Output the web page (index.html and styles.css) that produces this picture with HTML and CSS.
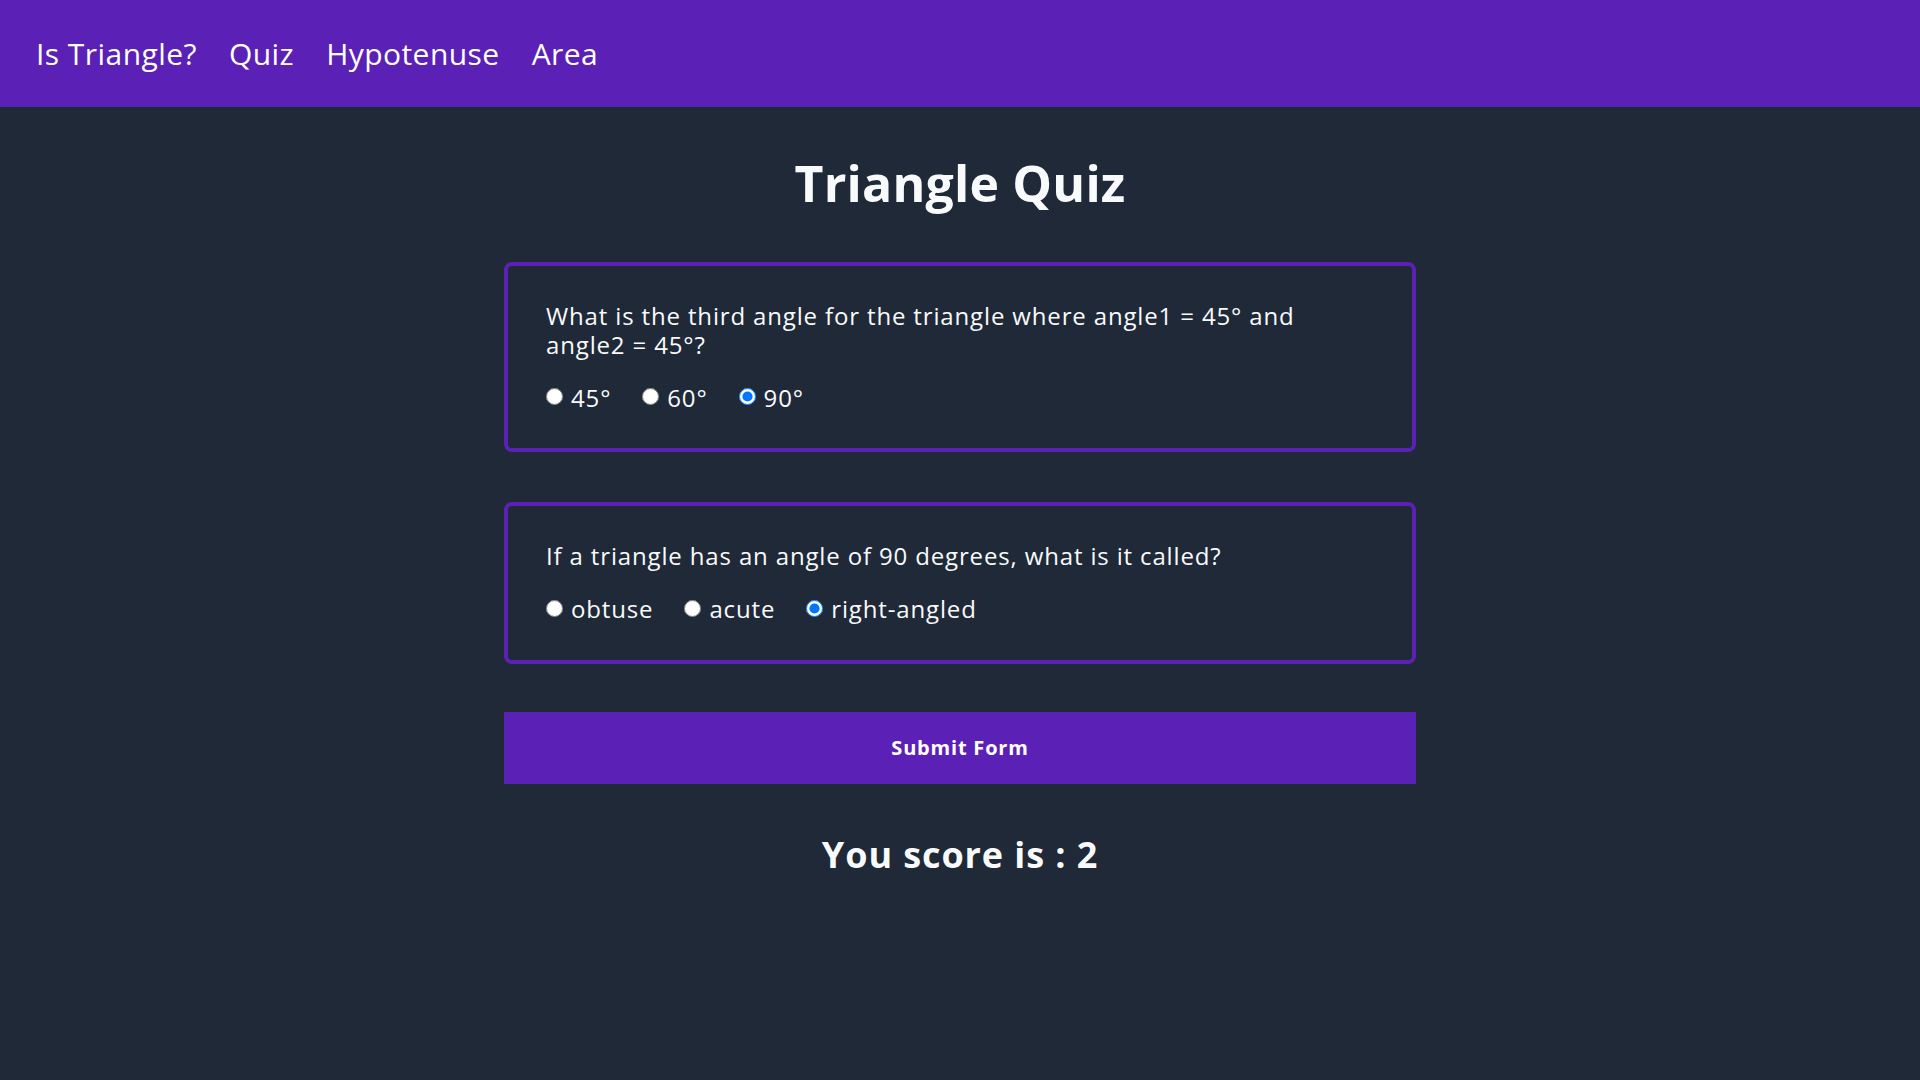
FILE: index.html
```html
<!DOCTYPE html>
<html lang="en">
<head>
<meta charset="utf-8">
<title>Triangle Quiz</title>
<link rel="stylesheet" href="styles.css">
</head>
<body>
<nav class="navbar">
  <a class="nav-link" href="#">Is Triangle?</a>
  <a class="nav-link" href="#">Quiz</a>
  <a class="nav-link" href="#">Hypotenuse</a>
  <a class="nav-link" href="#">Area</a>
</nav>
<main class="page">
  <h1 class="title">Triangle Quiz</h1>
  <form class="quiz-form">
    <div class="question-card">
      <p class="question">What is the third angle for the triangle where angle1 = 45° and angle2 = 45°?</p>
      <div class="options">
        <label class="option"><input type="radio" name="q1" value="45"><span>45°</span></label>
        <label class="option"><input type="radio" name="q1" value="60"><span>60°</span></label>
        <label class="option"><input type="radio" name="q1" value="90" checked><span>90°</span></label>
      </div>
    </div>
    <div class="question-card">
      <p class="question">If a triangle has an angle of 90 degrees, what is it called?</p>
      <div class="options">
        <label class="option"><input type="radio" name="q2" value="obtuse"><span>obtuse</span></label>
        <label class="option"><input type="radio" name="q2" value="acute"><span>acute</span></label>
        <label class="option"><input type="radio" name="q2" value="right" checked><span>right-angled</span></label>
      </div>
    </div>
    <button type="button" class="submit-btn">Submit Form</button>
  </form>
  <h2 class="score">You score is : 2</h2>
</main>
</body>
</html>
```

FILE: styles.css
```css
* {
  box-sizing: border-box;
}

html, body {
  margin: 0;
  padding: 0;
}

body {
  background: #1f2937;
  color: #f9fafb;
  font-family: "Open Sans", "Liberation Sans", sans-serif;
  min-height: 1080px;
}

.navbar {
  height: 107px;
  background: #5b21b6;
  display: flex;
  align-items: center;
  gap: 32px;
  padding-left: 36px;
}

.nav-link {
  color: #ffffff;
  text-decoration: none;
  font-size: 30px;
  letter-spacing: 0.45px;
}

.page {
  width: 912px;
  margin: 0 auto;
  display: flex;
  flex-direction: column;
}

.title {
  margin: 46px 0 0;
  font-size: 50px;
  line-height: 60px;
  font-weight: 700;
  text-align: center;
  letter-spacing: 0.2px;
}

.quiz-form {
  margin-top: 49px;
  display: flex;
  flex-direction: column;
  gap: 50px;
}

.question-card {
  border: 4px solid #5b21b6;
  border-radius: 8px;
  padding: 36px 64px 36px 38px;
}

.question {
  margin: 0 0 24px;
  font-size: 24px;
  line-height: 28.8px;
  letter-spacing: 0.85px;
}

.options {
  display: flex;
  align-items: center;
  font-size: 24px;
  line-height: 28.8px;
  letter-spacing: 0.85px;
}

.option {
  display: inline-flex;
  align-items: center;
  gap: 8px;
  margin-right: 31px;
}

.option input {
  width: 17px;
  height: 17px;
  margin: -2px 0 0;
}

.submit-btn {
  height: 72px;
  margin-top: -2px;
  border: none;
  background: #5b21b6;
  color: #ffffff;
  font-family: "Open Sans", "Liberation Sans", sans-serif;
  font-size: 20px;
  font-weight: 700;
  letter-spacing: 0.8px;
}

.score {
  margin: 49px 0 0;
  font-size: 36px;
  line-height: 43px;
  font-weight: 700;
  text-align: center;
  letter-spacing: 0.9px;
}
```
